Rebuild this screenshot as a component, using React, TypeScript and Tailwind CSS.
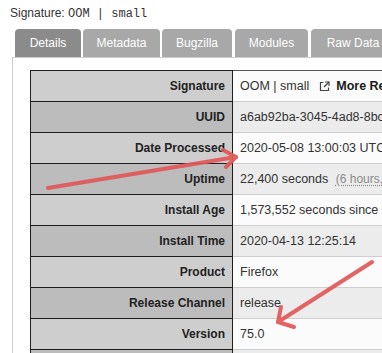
import React from "react";

const rows: { label: string; value: React.ReactNode }[] = [
  {
    label: "Signature",
    value: (
      <span className="flex items-center whitespace-nowrap">
        <span>OOM | small</span>
        <span className="ml-[10px] flex items-center font-bold text-[#1a1a1a]">
          <svg width="11" height="11" viewBox="0 0 11 11" className="mr-[6px]" fill="none" stroke="#444" strokeWidth="1.2">
            <path d="M4.5 1.5H1.5V9.5H9.5V6.5" />
            <path d="M6 1H10V5" />
            <path d="M10 1L5 6" />
          </svg>
          More Reports
        </span>
      </span>
    ),
  },
  { label: "UUID", value: "a6ab92ba-3045-4ad8-8bc0-7e3c5a200508" },
  { label: "Date Processed", value: "2020-05-08 13:00:03 UTC" },
  {
    label: "Uptime",
    value: (
      <span className="whitespace-nowrap">
        22,400 seconds{" "}
        <span className="ml-[4px] text-[12px] text-[#8a8a8a] underline decoration-dotted underline-offset-2">(6 hours, 13 minutes)</span>
      </span>
    ),
  },
  { label: "Install Age", value: "1,573,552 seconds since version was first installed" },
  { label: "Install Time", value: "2020-04-13 12:25:14" },
  { label: "Product", value: "Firefox" },
  { label: "Release Channel", value: "release" },
  { label: "Version", value: "75.0" },
  { label: "Build ID", value: "20200403170909" },
];

const tabs = [
  { name: "Details", w: "w-[66px]", active: true, ml: "ml-0" },
  { name: "Metadata", w: "w-[77px]", active: false, ml: "ml-[2px]" },
  { name: "Bugzilla", w: "w-[70px]", active: false, ml: "ml-[2px]" },
  { name: "Modules", w: "w-[73px]", active: false, ml: "ml-[3px]" },
  { name: "Raw Data", w: "w-[84px]", active: false, ml: "ml-[3px]" },
];

export default function App() {
  return (
    <div
      className="relative w-[382px] h-[353px] overflow-hidden bg-white text-[#333]"
      style={{ fontFamily: '"Liberation Sans", Arial, sans-serif' }}
    >
      <div className="h-[29px] pt-[5px] pl-[10px] text-[12px] leading-[16px] whitespace-nowrap text-[#333]">
        Signature:{" "}
        <span style={{ fontFamily: '"Liberation Mono", "Courier New", monospace' }}>OOM | small</span>
      </div>

      <div className="flex pl-[15px] h-[28px] whitespace-nowrap">
        {tabs.map((t) => (
          <div
            key={t.name}
            className={`${t.w} ${t.ml} shrink-0 h-[28px] rounded-t-[4px] flex items-center justify-center text-[12px] text-white ${
              t.active ? "bg-[#8b8b8b]" : "bg-[#a8a8a8]"
            }`}
          >
            {t.name}
          </div>
        ))}
      </div>

      <div className="ml-[12px] border-l border-t border-[#cdcdcd] pl-[17px] pt-[12px] h-[400px]">
        <div className="w-[600px]">
          {rows.map((r, i) => {
            const even = i % 2 === 1;
            return (
              <div key={r.label} className="flex h-[31px]">
                <div
                  className={`w-[203px] shrink-0 border-l border-r border-t border-[#1e1e1e] flex items-center justify-end pr-[7px] text-[12px] font-bold text-[#222] ${
                    even ? "bg-[#bcbcbc]" : "bg-[#cecece]"
                  }`}
                >
                  {r.label}
                </div>
                <div
                  className={`flex-1 border-t flex items-center pl-[7px] text-[12.5px] text-[#333] whitespace-nowrap ${
                    i === 0 ? "border-[#555]" : "border-[#cfcfcf]"
                  } ${even ? "bg-[#ececec]" : "bg-[#fbfbfb]"}`}
                >
                  {r.value}
                </div>
              </div>
            );
          })}
        </div>
      </div>

      <svg
        className="absolute inset-0 pointer-events-none"
        width="382"
        height="353"
        viewBox="0 0 382 353"
        fill="none"
        stroke="#e25858"
        strokeWidth="4"
        strokeLinecap="round"
        strokeLinejoin="round"
        opacity="0.92"
      >
        <path d="M48 188 L236 157" />
        <path d="M223 150 L236 157 L226 167" />
        <path d="M372 262 L278 322" />
        <path d="M281 307 L278 322 L294 327" />
      </svg>
    </div>
  );
}
